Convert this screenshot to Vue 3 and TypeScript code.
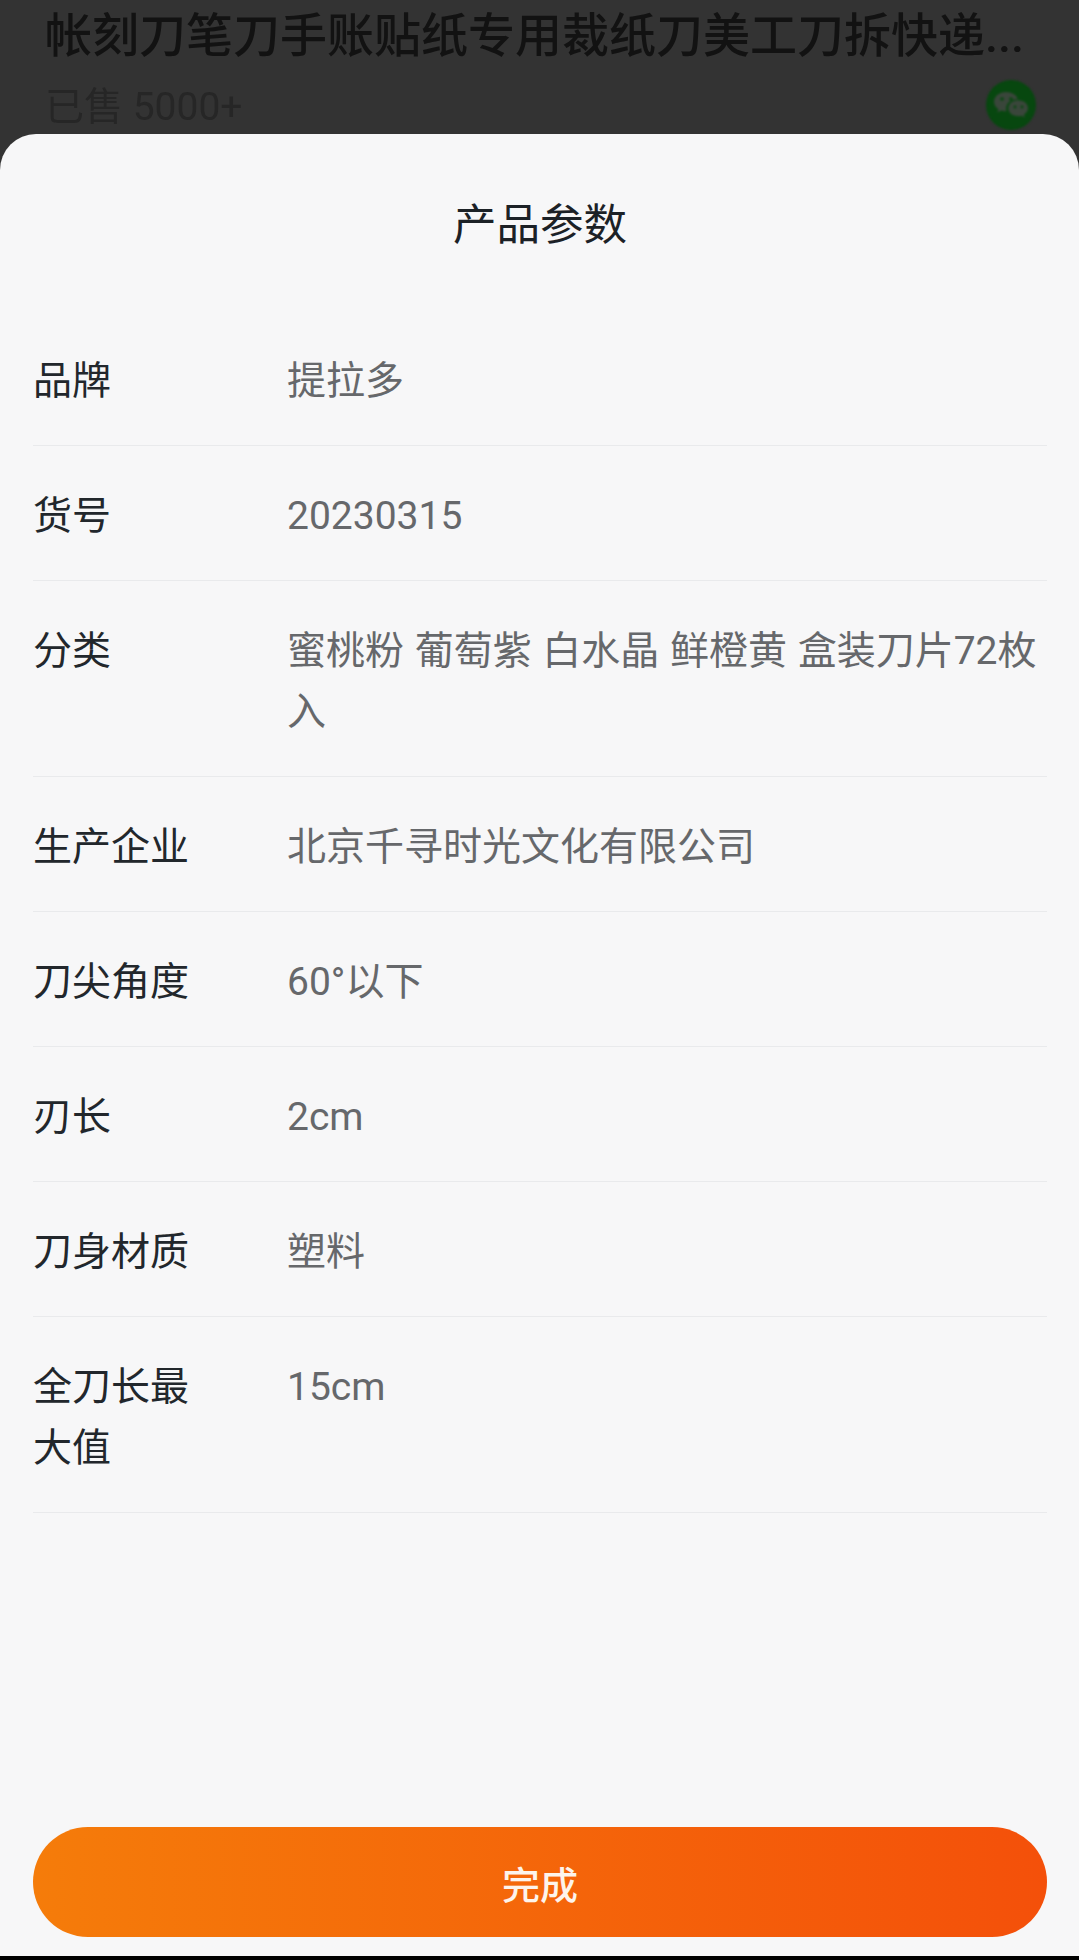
<script setup lang="ts">
interface ParamRow {
  label: string;
  value: string;
}

const rows: ParamRow[] = [
  { label: "品牌", value: "提拉多" },
  { label: "货号", value: "20230315" },
  { label: "分类", value: "蜜桃粉 葡萄紫 白水晶 鲜橙黄 盒装刀片72枚入" },
  { label: "生产企业", value: "北京千寻时光文化有限公司" },
  { label: "刀尖角度", value: "60°以下" },
  { label: "刃长", value: "2cm" },
  { label: "刀身材质", value: "塑料" },
  { label: "全刀长最大值", value: "15cm" },
];
</script>

<template>
  <div class="page">
    <header class="product">
      <div class="product-title">帐刻刀笔刀手账贴纸专用裁纸刀美工刀拆快递...</div>
      <div class="product-meta">
        <span class="sold">已售 5000+</span>
        <svg class="wechat" viewBox="0 0 50 50" aria-hidden="true">
          <circle cx="25" cy="25" r="25" fill="#07470f" />
          <path
            d="M20 12c-6.600 0-12 4.300-12 9.700 0 3.100 1.700 5.700 4.400 7.500l-1.100 3.300 3.900-2c1.400.4 2.900.7 4.300.7h1c-.3-.9-.4-1.800-.4-2.700 0-5.200 4.800-9.300 10.800-9.300h1C30.600 15 25.800 12 20 12z"
            fill="#3a463b"
          />
          <path
            d="M42 28.300c0-4.400-4.400-8-9.700-8-5.600 0-10 3.600-10 8s4.400 8 10 8c1.200 0 2.300-.2 3.400-.6l3.100 1.700-.8-2.800c2.400-1.500 4-3.700 4-6.300z"
            fill="#3a463b"
          />
          <circle cx="16" cy="19" r="1.800" fill="#07470f" />
          <circle cx="25" cy="19" r="1.800" fill="#07470f" />
          <circle cx="29" cy="27" r="1.400" fill="#07470f" />
          <circle cx="36" cy="27" r="1.400" fill="#07470f" />
        </svg>
      </div>
    </header>

    <section class="sheet">
      <h2 class="sheet-title">产品参数</h2>
      <div class="param-list">
        <div v-for="row in rows" :key="row.label" class="param-row">
          <div class="param-label">{{ row.label }}</div>
          <div class="param-value">{{ row.value }}</div>
        </div>
      </div>
      <button class="done-btn" type="button">完成</button>
    </section>
  </div>
</template>

<style scoped>
.page {
  display: flex;
  flex-direction: column;
  height: 1956px;
  overflow: hidden;
  background: #333333;
  font-family: "Roboto", "Noto Sans CJK SC", sans-serif;
}

.product {
  flex: none;
  height: 134px;
  padding: 0 33px 0 45px;
  box-sizing: border-box;
  overflow: hidden;
}

.product-title {
  margin-top: 5px;
  height: 62px;
  filter: blur(0.6px);
  font-size: 47px;
  font-weight: 500;
  line-height: 62px;
  color: #121212;
  white-space: nowrap;
}

.product-meta {
  display: flex;
  align-items: center;
  justify-content: space-between;
  height: 50px;
  margin-top: 13px;
}

.sold {
  margin-bottom: 4px;
  filter: blur(0.6px);
  font-size: 39px;
  color: #262626;
}

.wechat {
  width: 50px;
  height: 50px;
  margin-right: 10px;
  filter: blur(0.8px);
}

.sheet {
  flex: none;
  display: flex;
  flex-direction: column;
  height: 1822px;
  padding: 0 32px 0 33px;
  box-sizing: border-box;
  border-radius: 36px 36px 0 0;
  background: #f7f7f8;
}

.sheet-title {
  margin: 62px 0 0;
  height: 60px;
  font-size: 43.500px;
  font-weight: 400;
  line-height: 60px;
  text-align: center;
  color: #1c2126;
}

.param-list {
  margin-top: 55px;
  flex: 1;
}

.param-row {
  display: flex;
  padding: 40px 0 33px;
  border-bottom: 1px solid #e9eaec;
}

.param-label {
  flex: none;
  width: 254px;
  padding-right: 90px;
  box-sizing: border-box;
  font-size: 39px;
  line-height: 61px;
  color: #22272c;
}

.param-value {
  flex: 1;
  font-size: 39px;
  line-height: 61px;
  word-spacing: 1px;
  color: #66686b;
}

.done-btn {
  flex: none;
  height: 110px;
  margin-bottom: 19px;
  border: none;
  border-radius: 55px;
  background: linear-gradient(90deg, #f57c0a, #f4500a);
  font-family: inherit;
  font-size: 38px;
  font-weight: 500;
  color: #fdf4ec;
}
</style>

<style>
html,
body {
  background: #000;
}
</style>
